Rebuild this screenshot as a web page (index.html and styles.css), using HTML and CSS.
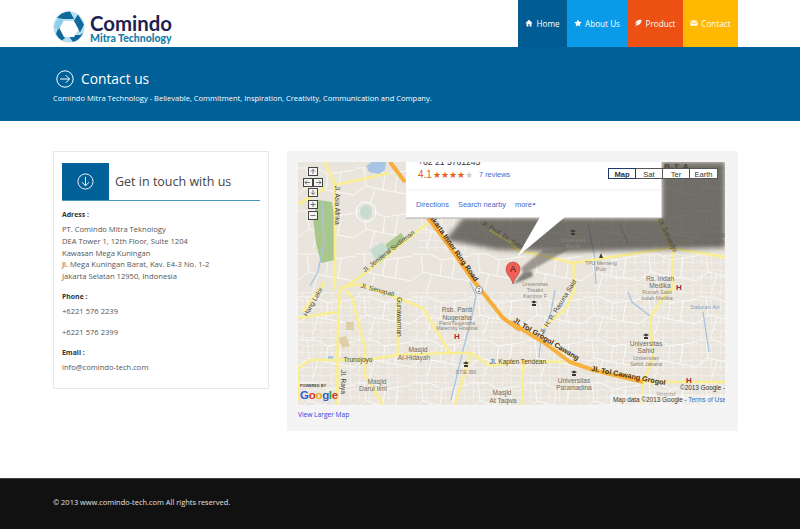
FILE: index.html
```html
<!DOCTYPE html>
<html lang="en">
<head>
<meta charset="utf-8">
<title>Contact us - Comindo Mitra Technology</title>
<link rel="stylesheet" href="styles.css">
</head>
<body>
<header class="topbar">
  <div class="wrap topbar-inner">
    <a class="brand" href="#">
      <svg class="brand-mark" viewBox="0 0 32 32" aria-hidden="true">
        <circle cx="16" cy="16" r="15.500" fill="#b5dff0"/>
        <path fill="#0f6a9c" d="M4 7A15.500 15.500 0 0 1 17 .5L21 8H10z"/>
        <path fill="#0f6a9c" d="M25 3.500l6 10-4 8-6-12z"/>
        <path fill="#0f6a9c" d="M30 22a15.500 15.500 0 0 1-10 9l-5-7h12z"/>
        <path fill="#0f6a9c" d="M6 15l6 12-3 2.500A15.500 15.500 0 0 1 3 23z"/>
        <path fill="#fff" d="M10.500 10h10l5 8.500-4.500 7.500H11L6.500 17.500z"/>
        <path fill="#8fcde8" d="M3.500 9.500 8 7.500l2.500 3-5 8-5-1.500z"/>
      </svg>
      <span class="brand-text">
        <span class="brand-name">Comindo</span>
        <span class="brand-sub">Mitra Technology</span>
      </span>
    </a>
    <nav class="nav">
      <a class="nav-item nav-home" href="#"><svg class="nav-icon" viewBox="0 0 10 10"><path d="M5 1 .5 5.200h1.400V9.300h2.300V6.400h1.600v2.900h2.300V5.200H9.500z"/></svg>Home</a>
      <a class="nav-item nav-about" href="#"><svg class="nav-icon" viewBox="0 0 10 10"><path d="M5 .6l1.400 2.900 3.200.4-2.300 2.200.6 3.200L5 7.800 2.100 9.300l.6-3.200L.4 3.900l3.200-.4z"/></svg>About Us</a>
      <a class="nav-item nav-product" href="#"><svg class="nav-icon" viewBox="0 0 10 10"><path d="M9.600 1C6 .6 2.600 1.600 2 5c-.1.800 0 1.400.2 1.800C3 5 4.600 3.700 6.600 3 5 4 3 6 1.600 8.800l.9.300.7-1.400C6.500 8.400 9 5.500 9.600 1z"/></svg>Product</a>
      <a class="nav-item nav-contact" href="#"><svg class="nav-icon" viewBox="0 0 10 10"><path d="M.5 2h9L5 5.700zM.5 3.200V8.300h9V3.200L5 7z"/></svg>Contact</a>
    </nav>
  </div>
</header>

<section class="banner">
  <div class="wrap">
    <div class="banner-title">
      <svg class="banner-icon" viewBox="0 0 18 18"><circle cx="9" cy="9" r="8.200"/><path d="M4 9h9.500M9.800 5.200 13.500 9l-3.700 3.800"/></svg>
      <h1 class="banner-heading">Contact us</h1>
    </div>
    <p class="banner-sub">Comindo Mitra Technology - Believable, Commitment, Inspiration, Creativity, Communication and Company.</p>
  </div>
</section>

<main class="wrap content">
  <aside class="card">
    <div class="card-head">
      <div class="card-head-box">
        <svg class="card-head-icon" viewBox="0 0 18 18"><circle cx="9" cy="9" r="8"/><path d="M9 4v9.500M5.200 9.800 9 13.500l3.800-3.700"/></svg>
      </div>
      <h2 class="card-title">Get in touch with us</h2>
    </div>
    <h3 class="label">Adress :</h3>
    <p class="info">PT. Comindo Mitra Teknology<br>DEA Tower 1, 12th Floor, Suite 1204<br>Kawasan Mega Kuningan<br>Jl. Mega Kuningan Barat, Kav. E4-3 No. 1-2<br>Jakarta Selatan 12950, Indonesia</p>
    <h3 class="label">Phone :</h3>
    <p class="info">+6221 576 2239</p>
    <p class="info">+6221 576 2399</p>
    <h3 class="label">Email :</h3>
    <p class="info">info@comindo-tech.com</p>
  </aside>

  <section class="map-panel">
    <svg class="map" viewBox="0 0 427 243" role="img" aria-label="Map of Jakarta">
      <defs>
        <pattern id="streets" width="57" height="43" patternUnits="userSpaceOnUse">
          <path class="street" d="M0 6h18l12 6 27-4M9 6l2 18-11 8M30 12l-2 16 29 5M11 24l17 4M15 43l5-17M43 10l-3 20"/>
        </pattern>
        <pattern id="streets2" width="19" height="15" patternUnits="userSpaceOnUse">
          <path class="street thin" d="M0 3l10 1 9-2M5 4 4 15M14 3l1 12M0 10l19 1"/>
        </pattern>
        <filter id="soft"><feGaussianBlur stdDeviation="2.500"/></filter>
        <filter id="softer"><feGaussianBlur stdDeviation="1"/></filter>
      </defs>

      <rect class="land" width="427" height="243"/>
      <rect fill="url(#streets)" width="427" height="243"/>
      <path fill="url(#streets2)" d="M110 130h180l20-40h117v153H110zM0 130h105v113H0zM120 60h307v30H120zM364 0h63v60h-63z"/>

      <path class="green" d="M20 38l14 2 3 20v38l-14 3-5-20-3-25z"/>
      <path class="green" d="M88 82l15-11 6 8-14 10-7-1z"/>
      <path class="pale" d="M72 88l12-8 10 10-13 13z"/>
      <ellipse class="pale" cx="68" cy="50" rx="6" ry="7"/>
      <circle class="ring-street" cx="68" cy="50" r="10"/>
      <path class="water-fill" d="M68 4l6-4h14l-1 8-6 4-10-2z"/>
      <path class="river" d="M24 40l2 40-6 30-8 14M172 120l6 14-5 24-8 30-12 50M257 128l-4 22-10 26-2 20M290 62l6 30 2 30M322 62l8 20M330 130l4 10 18 14M405 150l6 40"/>
      <path class="lot" d="M48 160h8v8h-8zM40 176l8-2 4 10-8 2z"/>
      <path class="lot-b" d="M30 194h5v5h-5z"/>

      <g class="road">
        <path d="M27 0l10 23v105"/>
        <path d="M37 23l55-12"/>
        <path d="M130 61 62 115 42 128 40 160l-1 83"/>
        <path d="M0 42l15-8 12-8"/>
        <path d="M42 126 60 122l32 11 33 13 24 40 3 5h21l19 13 30-5 43 1"/>
        <path d="M0 240V206l12-8h57l30-5 53-2"/>
        <path d="M100 136v57"/>
        <path d="M48 128l6 8 13 50v27l18 30"/>
        <path d="M0 156l32-5 8-1"/>
        <path d="M5 150l22-30"/>
        <path d="M212 86l63 15 97-15 55 9"/>
        <path d="M359 56l16 32-1 40-5 2-17 26 3 40-10 24-1 23"/>
        <path d="M275 101l2 27-3 5-6 13-23 20"/>
        <path d="M226 200l-2 20 1 23"/>
        <path d="M172 193l-15 50"/>
        <path d="M345 220h82"/>
      </g>
      <g class="ring">
        <path d="M92 0l15 20M130 56l19 25 26 37 4 5 26 33 17 12"/>
      </g>
      <path class="toll" d="M212 160l33 20 27 20 23 8 50 12"/>

      <path class="shadow" filter="url(#soft)" d="M147 78l18-22h199V0h63v86l-157 4-70-2z"/>
      <path class="tail-shadow" filter="url(#softer)" d="M226 112l44-24-25 0-22 18z"/>
      <path class="shadow-olive" d="M192 68l28 17"/>

      <g class="lbl-road">
        <text transform="translate(92 91) rotate(-38)" text-anchor="middle">Jl. Jenderal Sudirman</text>
        <text transform="translate(37 43) rotate(90)" text-anchor="middle">Jl. Asia Afrika</text>
        <text transform="translate(205 76) rotate(33)" text-anchor="middle">Jl. Prof. Dr. Satrio</text>
        <text transform="translate(366 70) rotate(65)" text-anchor="middle">Jl. Dr. Sahardjo</text>
        <text transform="translate(79 130) rotate(15)" text-anchor="middle">Jl. Senopati</text>
        <text transform="translate(17 141) rotate(-60)" text-anchor="middle">Hang Lekir</text>
        <text transform="translate(99 155) rotate(90)" text-anchor="middle">Gunawarman</text>
        <text transform="translate(43 220) rotate(90)" text-anchor="middle">Jl. Raya</text>
        <text transform="translate(262 146) rotate(-58)" text-anchor="middle">Jl. H. R. Rasuna Said</text>
        <text x="60" y="200" text-anchor="middle">Trunojoyo</text>
        <text x="220" y="202" text-anchor="middle">Jl. Kapten Tendean</text>
      </g>
      <g class="lbl-toll">
        <text transform="translate(153 86) rotate(55)" text-anchor="middle">Jakarta Inner Ring Road</text>
        <text transform="translate(247 179) rotate(31)" text-anchor="middle">Jl. Tol Grogol Cawang</text>
        <text transform="translate(330 216) rotate(11)" text-anchor="middle">Jl. Tol Cawang Grogol</text>
      </g>
      <g class="lbl-poi">
        <text x="159" y="150">Rsb. Panti</text><text x="159" y="158">Nugeraha</text>
        <text class="small" x="159" y="163">Panti Nugeraha</text><text class="small" x="159" y="168">Maternity Hospital</text>
        <text x="120" y="190">Masjid</text><text x="116" y="198">Al-Hidayah</text>
        <text x="79" y="222">Masjid</text><text x="75" y="229">Darul Ilmi</text>
        <text class="small" x="168" y="212">STIE IBII</text>
        <text x="204" y="233">Masjid</text><text x="205" y="241">At Taqwa</text>
        <text class="small" x="237" y="124">Universitas</text><text class="small" x="237" y="130">Trisakti</text><text class="small" x="237" y="136">Kampus F</text>
        <text x="348" y="184">Universitas</text><text x="348" y="191">Sahid</text>
        <text class="small" x="348" y="198">Universitas</text><text class="small" x="348" y="204">Sahid Jakarta</text>
        <text x="276" y="221">Universitas</text><text x="276" y="228">Paramadina</text>
        <text x="362" y="119">Rs. Indah</text><text x="362" y="126">Medika</text>
        <text class="small" x="359" y="132">Rumah Sakit</text><text class="small" x="359" y="138">Indah Medika</text>
        <text class="small" x="275" y="80">Universitas</text><text class="small" x="275" y="86">Borrie</text>
        <text class="small" x="303" y="103">TPU Menteng</text><text class="small" x="303" y="109">Pulo</text>
        <text x="416" y="75">Mushola</text><text x="410" y="82">Al Hidayah</text>
        <text class="water-label" x="407" y="147">Saluran Air</text>
        <text class="small" x="368" y="233.500">Hospital</text>
      </g>
      <g class="lbl-h">
        <text x="159" y="177">H</text><text x="381" y="128">H</text><text x="391" y="221">H</text>
      </g>
      <text class="lbl-top" x="366" y="7">B T A</text>
      <g class="moon">
        <path d="M139 195a3 3 0 1 0 0 6 2.500 2.500 0 1 1 0-6z"/>
        <path d="M96 220a3 3 0 1 0 0 6 2.500 2.500 0 1 1 0-6z"/>
        <path d="M191 233a3 3 0 1 0 0 6 2.500 2.500 0 1 1 0-6z"/>
        <path d="M427 85a3 3 0 1 0 0 6 2.500 2.500 0 1 1 0-6z"/>
      </g>
      <g class="edu">
        <path d="M168 199.500l3 1.500-3 1.500-3-1.500zM166 203h4v2h-4z"/>
        <path d="M348 171.500l3 1.500-3 1.500-3-1.500zM346 175h4v2h-4z"/>
        <path d="M276 208.500l3 1.500-3 1.500-3-1.500zM274 212h4v2h-4z"/>
        <path d="M236 138.500l3 1.500-3 1.500-3-1.500zM234 142h4v2h-4z"/>
        <path d="M275 67.500l3 1.500-3 1.500-3-1.500zM273 71h4v2h-4z"/>
        <path d="M303 91l2 5h-4z"/>
      </g>
      <circle class="badge" cx="181" cy="128" r="3.500"/>
      <text class="badge-text" x="181" y="130">2</text>

      <g class="bubble">
        <rect class="bubble-edge" x="108" y="0" width="256.500" height="56.500"/>
        <rect class="bubble-body" x="108" y="0" width="255.500" height="55.500"/>
        <path class="bubble-body" d="M242 55 219 95l48-40z"/>
        <path class="bubble-rule" d="M108 28h255.500"/>
        <text class="iw-phone" x="120" y="3">+62 21 5761245</text>
        <text class="iw-rate" x="120" y="15.500">4.1</text>
        <text class="iw-stars" x="135" y="15.500">★★★★<tspan class="iw-star-off">★</tspan></text>
        <text class="iw-link" x="181" y="15">7 reviews</text>
        <text class="iw-link" x="118" y="45">Directions</text>
        <text class="iw-link" x="160" y="45">Search nearby</text>
        <text class="iw-link" x="217" y="45">more</text>
        <path class="iw-caret" d="M234 41.500h4l-2 2z"/>
      </g>

      <path class="pin-shadow" filter="url(#softer)" d="M215 122l10-11 9-2 1 5-8 4z"/>
      <path class="pin" d="M215 122c-1-6-7-9-7-15a7 7 0 0 1 14 0c0 6-6 9-7 15z"/>
      <text class="pin-text" x="215" y="109.500">A</text>

      <g class="ctl">
        <rect x="10.500" y="5.500" width="9" height="8"/><rect x="5.500" y="16.500" width="9" height="8"/><rect x="15.500" y="16.500" width="9" height="8"/><rect x="10.500" y="26.500" width="9" height="8"/><rect x="10.500" y="38.500" width="9" height="8"/><rect x="10.500" y="49.500" width="9" height="8"/>
      </g>
      <g class="ctl-mark">
        <path d="M15 12V7.500M13 9.500l2-2 2 2M7 20.500h5M9 18.500l-2 2 2 2M18 20.500h5M21 18.500l2 2-2 2M15 28v4.500M13 30.500l2 2 2-2M12.500 42.500h5M15 40v5M12.500 53.500h5"/>
      </g>

      <g class="types">
        <rect class="type" x="310.500" y="6.500" width="27" height="10"/>
        <rect class="type" x="337.500" y="6.500" width="27" height="10"/>
        <rect class="type" x="364.500" y="6.500" width="27" height="10"/>
        <rect class="type" x="391.500" y="6.500" width="28" height="10"/>
        <rect class="type-on" x="310.500" y="6.500" width="27" height="10"/>
        <text class="type-text bold" x="324" y="14.500">Map</text>
        <text class="type-text" x="351" y="14.500">Sat</text>
        <text class="type-text" x="378" y="14.500">Ter</text>
        <text class="type-text" x="405.500" y="14.500">Earth</text>
      </g>

      <text class="powered" x="2" y="225">POWERED BY</text>
      <text class="g-logo" x="2" y="237"><tspan fill="#2f5fcf">G</tspan><tspan fill="#d8382c">o</tspan><tspan fill="#e8b020">o</tspan><tspan fill="#2f5fcf">g</tspan><tspan fill="#3a9a3a">l</tspan><tspan fill="#d8382c">e</tspan></text>
      <text class="attrib" x="382" y="228">©2013 Google -</text>
      <rect class="attrib-bg" x="312" y="232" width="115" height="11"/>
      <text class="attrib" x="315" y="240">Map data ©2013 Google - <tspan class="attrib-link">Terms of Use</tspan></text>
    </svg>
    <a class="map-link" href="#">View Larger Map</a>
  </section>
</main>

<footer class="footer">
  <div class="wrap">© 2013 www.comindo-tech.com All rights reserved.</div>
</footer>
</body>
</html>
```

FILE: styles.css
```css
* { box-sizing: border-box; }
html, body { margin: 0; padding: 0; }
body {
  height: 529px;
  overflow: hidden;
  background: #fff;
  display: flex;
  flex-direction: column;
  font-family: "Open Sans", "Liberation Sans", sans-serif;
  color: #444;
}
a { text-decoration: none; color: inherit; }
h1, h2, h3, p { margin: 0; font-weight: normal; }
.wrap { width: 685px; margin-left: 53px; }

/* top bar */
.topbar { height: 47px; flex: none; background: #fff; }
.topbar-inner { display: flex; justify-content: space-between; height: 100%; }
.brand { display: flex; align-items: center; gap: 5px; padding-top: 9px; height: 47px; }
.brand-mark { width: 32px; height: 32px; margin-top: -2px; }
.brand-text { display: flex; flex-direction: column; }
.brand-name {
  font-family: "Lato", sans-serif;
  font-weight: 700;
  font-size: 20.4px;
  line-height: 20px;
  color: #1f2250;
}
.brand-sub {
  font-family: "Lato", sans-serif;
  font-weight: 900;
  font-size: 10.5px;
  line-height: 11px;
  color: #1a7ea8;
}
.nav { display: flex; height: 47px; }
.nav-item {
  display: flex;
  align-items: center;
  justify-content: center;
  gap: 3px;
  font-size: 8.2px;
  color: #fff;
}
.nav-icon { width: 8px; height: 8px; fill: #fff; flex: none; margin-top: -1px; }
.nav-home { width: 49px; background: #005c92; }
.nav-about { width: 60px; background: #0a9ae8; }
.nav-product { width: 56px; background: #ec5012; }
.nav-contact { width: 55px; background: #ffb900; }

/* banner */
.banner {
  height: 74px;
  flex: none;
  background: #006098;
  padding-top: 22px;
  color: #fff;
}
.banner-title { display: flex; align-items: center; gap: 7px; margin-left: 3px; height: 20px; }
.banner-icon { width: 18px; height: 18px; fill: none; stroke: #fff; stroke-width: 1; }
.banner-heading { font-size: 13.8px; line-height: 20px; }
.banner-sub { font-size: 7.55px; line-height: 12px; margin-top: 3px; }

/* content */
.content {
  flex: 1;
  display: flex;
  align-items: flex-start;
  gap: 18px;
  padding-top: 30px;
}
.card {
  width: 216px;
  height: 238px;
  flex: none;
  background: #fff;
  border: 1px solid #e8e8e8;
  padding: 11px 8px 0;
}
.card-head {
  display: flex;
  align-items: center;
  height: 38px;
  border-bottom: 1px solid #4c95bd;
  margin-bottom: 8px;
}
.card-head-box {
  width: 47px;
  height: 37px;
  background: #006098;
  display: flex;
  align-items: center;
  justify-content: center;
  margin-right: 6px;
}
.card-head-icon { width: 17px; height: 17px; fill: none; stroke: #fff; stroke-width: 1; }
.card-title { font-size: 12.5px; line-height: 20px; color: #444; }
.label {
  font-size: 6.9px;
  font-weight: 700;
  line-height: 12px;
  color: #333;
  margin-bottom: 3px;
}
.info {
  font-size: 7.6px;
  line-height: 11.8px;
  color: #555;
  margin-bottom: 8.500px;
}

/* map */
.map-panel {
  width: 451px;
  height: 280px;
  flex: none;
  background: #f4f4f4;
  padding: 11px 13px 0 11px;
}
.map { display: block; width: 427px; height: 243px; }
.map-link { display: block; margin-top: 5px; font-size: 6.6px; line-height: 10px; color: #3a3ae0; }
.map text { font-family: "Liberation Sans", Arial, sans-serif; }

.land { fill: #e9e5dc; }
.street { fill: none; stroke: #fff; stroke-width: 1; opacity: .7; }
.street.thin { stroke-width: .7; opacity: .6; }
.ring-street { fill: none; stroke: #fff; stroke-width: 1; }
.green { fill: #a9c78d; }
.pale { fill: #c7dcd0; }
.water-fill { fill: #a9c5e4; }
.river { fill: none; stroke: #a6c4e2; stroke-width: 1.3; }
.lot { fill: #ddd0a8; }
.lot-b { fill: #a9c5e4; }
.road path { fill: none; stroke: #fbee91; stroke-width: 2.600; stroke-linejoin: round; }
.ring path { fill: none; stroke: #f6ad3a; stroke-width: 4; stroke-linejoin: round; }
.toll { fill: none; stroke: #f6b33f; stroke-width: 4; stroke-linejoin: round; }
.shadow { fill: #3c3a36; opacity: .7; }
.tail-shadow { fill: #3c3a36; opacity: .45; }
.shadow-olive { fill: none; stroke: #8f8c50; stroke-width: 2.500; }

.lbl-road text { font-size: 6.6px; fill: #4a4636; }
.lbl-toll text { font-size: 7.2px; font-weight: 700; fill: #4a2a00; }
.lbl-poi text { font-size: 6.6px; fill: #6f6a60; text-anchor: middle; }
.lbl-poi text.small { font-size: 5.2px; fill: #8a857a; }
.lbl-poi text.water-label { font-size: 6px; fill: #7c9fc4; }
.lbl-h text { font-size: 8px; font-weight: 700; fill: #a32a3a; text-anchor: middle; }
.lbl-top { font-size: 8px; font-weight: 700; fill: #4a4640; letter-spacing: 1px; }
.moon path { fill: #a07c10; }
.edu path { fill: #3a3a3a; }
.badge { fill: #fff; stroke: #777; stroke-width: .8; }
.badge-text { font-size: 5px; fill: #333; text-anchor: middle; }

.bubble-edge { fill: #aaa; }
.bubble-body { fill: #fff; }
.bubble-rule { stroke: #f6f5ee; stroke-width: 1.5; }
.iw-phone { font-size: 8.600px; fill: #333; }
.iw-rate { font-size: 10px; fill: #e2621c; }
.iw-stars { font-size: 9.4px; fill: #e2621c; }
.iw-star-off { fill: #ccc; }
.iw-link { font-size: 7.4px; fill: #4a67c8; }
.iw-caret { fill: #4a67c8; }
.pin-shadow { fill: #55524c; opacity: .7; }
.pin { fill: #ee5f58; stroke: #b03a34; stroke-width: .6; }
.pin-text { font-size: 9px; fill: #4a1010; text-anchor: middle; }

.ctl rect { fill: #f4f4f0; stroke: #444; stroke-width: 1; }
.ctl-mark path { fill: none; stroke: #555; stroke-width: .8; }
.type { fill: #fff; stroke: #555; stroke-width: 1; }
.type-on { fill: #fff; stroke: #1e3a6a; stroke-width: 1; }
.type-text { font-size: 7.6px; fill: #333; text-anchor: middle; }
.type-text.bold { font-weight: 700; }
.powered { font-size: 3.8px; font-weight: 700; fill: #444; }
.g-logo { font-size: 11.500px; font-weight: 700; letter-spacing: -.3px; }
.attrib { font-size: 6.4px; fill: #333; }
.attrib-bg { fill: #fff; opacity: .35; }
.attrib-link { fill: #3a6ac8; }

/* footer */
.footer {
  height: 51px;
  flex: none;
  background: #111;
  border-top: 1px solid #444;
  padding-top: 17px;
  font-size: 7.45px;
  line-height: 12px;
  color: #e2e2e2;
}
```
